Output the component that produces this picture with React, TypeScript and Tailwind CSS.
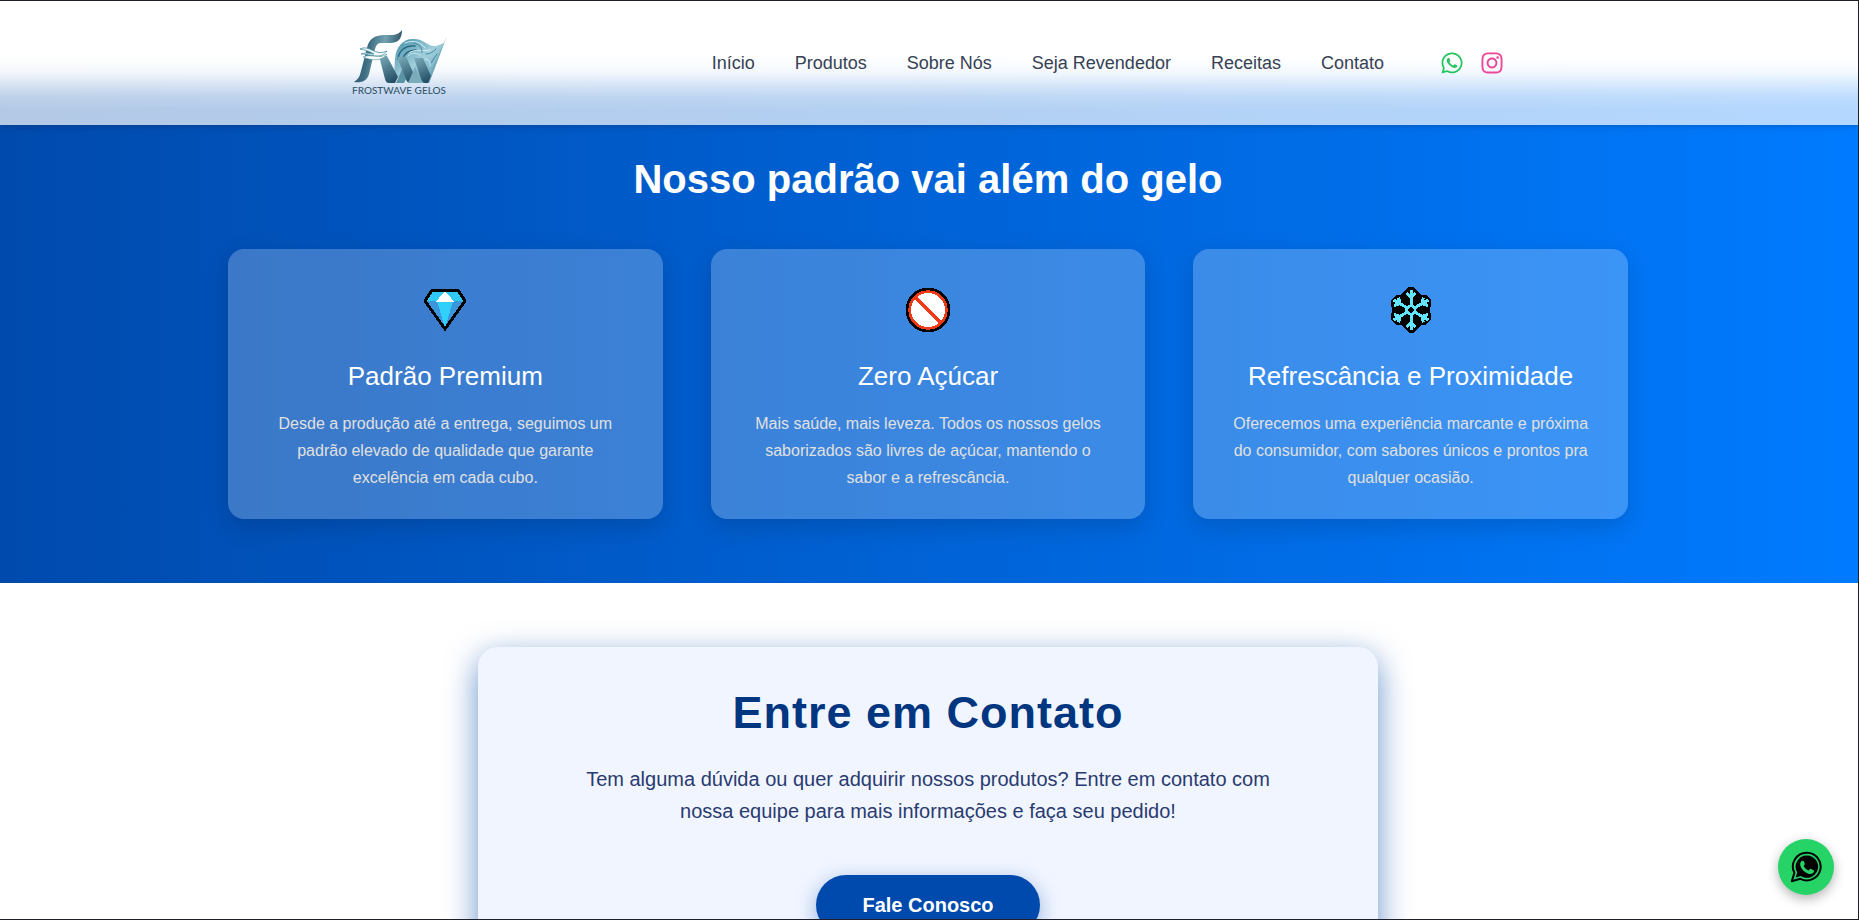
import { FaInstagram, FaWhatsapp } from "react-icons/fa";
import type { ReactNode } from "react";

const links = ["Início", "Produtos", "Sobre Nós", "Seja Revendedor", "Receitas", "Contato"];

function Logo() {
  return (
    <svg viewBox="0 0 96 68" className="h-[68px] w-24" role="img" aria-label="Frostwave Gelos">
      <defs>
        <linearGradient id="steel" x1="0" y1="0.3" x2="1" y2="0.5">
          <stop offset="0" stopColor="#2b5064" />
          <stop offset="0.3" stopColor="#3d6c80" />
          <stop offset="0.6" stopColor="#72a3b2" />
          <stop offset="1" stopColor="#24475c" />
        </linearGradient>
        <linearGradient id="steel2" x1="0.2" y1="0" x2="0.6" y2="1">
          <stop offset="0" stopColor="#76a8b6" />
          <stop offset="1" stopColor="#254f66" />
        </linearGradient>
        <linearGradient id="water" x1="0" y1="0" x2="1" y2="1">
          <stop offset="0" stopColor="#3f8da6" />
          <stop offset="0.5" stopColor="#a2cfdc" />
          <stop offset="1" stopColor="#4d95ab" />
        </linearGradient>
      </defs>
      <path d="M43 30C44 16 53 9 62 10C72 10 76 18 84 17L92 14L77 54L60 54L42 46Z" fill="url(#water)" />
      <g fill="none" strokeLinecap="round">
        <path d="M46 30C47 21 54 16 63 17M50 31C52 25 57 21 64 21" stroke="#23647e" strokeWidth="1.3" />
        <path d="M53 14C60 11 68 12 73 19M57 24C63 19 72 23 78 21" stroke="#dff2f7" strokeWidth="0.9" />
        <path d="M62 14C67 15 70 18 70 23M74 25C77 25 80 24 84 20M79 34L85 25" stroke="#3a7f99" strokeWidth="0.9" />
        <path d="M56 27C60 23 65 24 68 26M73 30C76 30 79 32 78 37" stroke="#d5eff5" strokeWidth="0.8" />
      </g>
      <path d="M95 7L77 54H74L91 16Z" fill="#6ba9ba" />
      <path d="M50 1C50 10 46 14 38 14H29C25 14 24 17 23 20L17 45C15 52 10 54 2 53C7 50 8 46 9 42L15 19C17 9 24 6 32 6H39C44 6 48 4 50 1Z" fill="url(#steel)" />
      <path d="M27 27H35L46 48L43 54H37C35 54 34 53 33 50Z" fill="url(#steel2)" />
      <path d="M44 54L53 34L58 42L52 54Z" fill="#5b93a6" />
      <path d="M45 28H54L66 54H59C56 54 55 53 54 50Z" fill="url(#steel2)" />
      <path d="M62 29H71L79 47L76 54H73C71 54 70 52 69 50Z" fill="url(#steel2)" />
      <path d="M56 54L63 38L69 50L67 54Z" fill="#79abba" />
      <path d="M8 20C17 15 23 28 35 22C29 31 20 25 9 25C14 23 19 25 22 25C17 22 13 21 8 20Z" fill="#f4fbfd" stroke="#4d90a5" strokeWidth="0.8" />
      <path d="M11 28C20 24 26 31 35 25C31 32 20 32 11 28Z" fill="#ffffff" stroke="#4d90a5" strokeWidth="0.6" />
      <text x="0" y="65" fontFamily="Lato, sans-serif" fontSize="10" fontWeight="500" fill="#34566b">
        FROSTWAVE GELOS
      </text>
    </svg>
  );
}

function Diamond() {
  return (
    <svg viewBox="0 0 48 48" className="size-12" shapeRendering="crispEdges" aria-hidden="true">
      <path d="M11 4H37L44 15L24 43L4 15Z" fill="#3a96dd" />
      <path d="M11 4H37L44 15H4Z" fill="#30c8f6" />
      <path d="M16 15H32L24 42Z" fill="#30d0fa" />
      <path d="M24 5L33 15.500H15Z" fill="#ffffff" />
      <path d="M11 4H37L44 15L24 43L4 15Z" fill="none" stroke="#000000" strokeWidth="3" />
    </svg>
  );
}

function Prohibited() {
  return (
    <svg viewBox="0 0 48 48" className="size-12" shapeRendering="crispEdges" aria-hidden="true">
      <circle cx="24" cy="24" r="22.500" fill="#000000" />
      <circle cx="24" cy="24" r="18.300" fill="#ffffff" stroke="#f03a17" strokeWidth="2.800" />
      <path d="M11 11L37 37" stroke="#f03a17" strokeWidth="3" />
    </svg>
  );
}

function Snowflake() {
  return (
    <svg viewBox="0 0 48 48" className="size-12" shapeRendering="crispEdges" aria-hidden="true">
      <path
        d="M21.500 1H26.500L34 9L39 9L44 14V19L42.500 24L44 29V34L39 38.500L34 39L26.500 46.500H21.500L14 39L9 38.500L4 34V29L5.500 24L4 19V14L9 9L14 9Z"
        fill="#000000"
      />
      {[0, 60, 120, 180, 240, 300].map((angle) => (
        <path
          key={angle}
          d="M24 19V4M19.500 7L24 11.500L28.500 7"
          transform={`rotate(${angle} 24 24)`}
          fill="none"
          stroke="#61e6fd"
          strokeWidth="3"
        />
      ))}
      <circle cx="24" cy="24" r="4.200" fill="#000000" stroke="#61e6fd" strokeWidth="2.800" />
    </svg>
  );
}

function ChatBubble() {
  return (
    <svg viewBox="0 0 32 32" className="size-8" aria-hidden="true">
      <path
        d="M17 1.800A13.800 13.800 0 1 1 10.400 27.800L1.800 30.200L4.400 21.900A13.800 13.800 0 0 1 17 1.800Z"
        fill="none"
        stroke="#000000"
        strokeWidth="2"
        strokeLinejoin="round"
      />
      <path d="M17 4.600A11.100 11.100 0 1 1 10.800 24.900L5.600 26.500L7.300 21.500A11.100 11.100 0 0 1 17 4.600Z" fill="#000000" />
      <path
        d="M12.300 9.800C13.200 9.500 13.700 9.900 14 10.700L14.800 12.600C15.100 13.600 14 14.200 13.700 14.900C14.800 17 16.400 18.500 18.700 19.400C19.600 18.900 20 17.600 20.900 17.900L23.300 19.100C24.100 19.500 24.200 20 23.900 20.800C23 23 20.600 23.500 18.400 22.700C14.500 21.300 11.900 18.900 10.500 15.200C9.700 12.900 10.200 10.600 12.300 9.800Z"
        fill="#25d366"
      />
    </svg>
  );
}

const features: { icon: ReactNode; title: string; text: string }[] = [
  {
    icon: <Diamond />,
    title: "Padrão Premium",
    text: "Desde a produção até a entrega, seguimos um padrão elevado de qualidade que garante excelência em cada cubo.",
  },
  {
    icon: <Prohibited />,
    title: "Zero Açúcar",
    text: "Mais saúde, mais leveza. Todos os nossos gelos saborizados são livres de açúcar, mantendo o sabor e a refrescância.",
  },
  {
    icon: <Snowflake />,
    title: "Refrescância e Proximidade",
    text: "Oferecemos uma experiência marcante e próxima do consumidor, com sabores únicos e prontos pra qualquer ocasião.",
  },
];

export default function App() {
  return (
    <div className="bg-white font-['Liberation_Sans',Arial,sans-serif]">
      <header className="sticky top-0 z-10 bg-[linear-gradient(180deg,#fff_44%,rgba(255,255,255,0.96)_50%,rgba(255,255,255,0.84)_58%,rgba(255,255,255,0.5)_67%,rgba(255,255,255,0.16)_77%,rgba(255,255,255,0)_88%),linear-gradient(90deg,#b3c9e6,#b3d7ff)] pr-[3px] shadow-md">
        <div className="mx-auto flex h-[125px] max-w-6xl items-center justify-between">
          <a href="#inicio">
            <Logo />
          </a>
          <div className="flex items-center gap-14">
            <nav className="flex gap-10 text-lg font-medium text-gray-700">
              {links.map((link) => (
                <a key={link} href="#secao">
                  {link}
                </a>
              ))}
            </nav>
            <div className="flex gap-4">
              <a href="#whatsapp" aria-label="WhatsApp" className="text-[#22c55e]">
                <FaWhatsapp size={24} />
              </a>
              <a href="#instagram" aria-label="Instagram" className="text-[#ec4899]">
                <FaInstagram size={24} />
              </a>
            </div>
          </div>
        </div>
      </header>

      <main>
        <section className="bg-[linear-gradient(90deg,#004aad,#007bff)] pt-6 pr-[35px] pb-16 pl-8 text-center text-white">
          <h2 className="mb-10 text-[40px] leading-[60px] font-bold">Nosso padrão vai além do gelo</h2>
          <div className="mx-auto grid max-w-[1400px] grid-cols-3 gap-12">
            {features.map((feature) => (
              <article
                key={feature.title}
                className="rounded-2xl bg-white/23 px-9 pt-[37px] pb-7 shadow-[0_8px_24px_rgba(0,0,0,0.15)]"
              >
                <div className="mb-6 flex justify-center">{feature.icon}</div>
                <h3 className="mb-4 text-[26px] leading-9">{feature.title}</h3>
                <p className="text-base leading-[27px] font-light text-[#e0e0e0]">{feature.text}</p>
              </article>
            ))}
          </div>
        </section>

        <section className="py-16 pr-[35px] pl-8">
          <div className="mx-auto max-w-[900px] rounded-[20px] bg-[#f0f5ff] px-24 pt-9 pb-16 text-center shadow-[0_10px_32px_rgba(0,74,173,0.6)]">
            <h2 className="mb-5 text-[45px] leading-[60px] font-bold tracking-[1px] text-[#003580]">Entre em Contato</h2>
            <p className="mb-12 text-xl leading-8 text-[#2a3b6f]">
              Tem alguma dúvida ou quer adquirir nossos produtos? Entre em contato com nossa equipe para mais
              informações e faça seu pedido!
            </p>
            <a
              href="#contato"
              className="inline-block rounded-full bg-[#004aad] px-[46px] py-4 text-xl leading-7 font-bold text-white shadow-[0_6px_20px_rgba(0,74,173,0.4)]"
            >
              Fale Conosco
            </a>
          </div>
        </section>
      </main>

      <a
        href="#whatsapp"
        aria-label="Fale pelo WhatsApp"
        className="fixed right-[25px] bottom-[25px] z-20 flex size-14 items-center justify-center rounded-full bg-[#25d366] shadow-[0_4px_12px_rgba(0,0,0,0.3)]"
      >
        <ChatBubble />
      </a>
      <div className="pointer-events-none fixed inset-0 z-30 border-y border-r border-[#1f1f2b]" />
    </div>
  );
}
